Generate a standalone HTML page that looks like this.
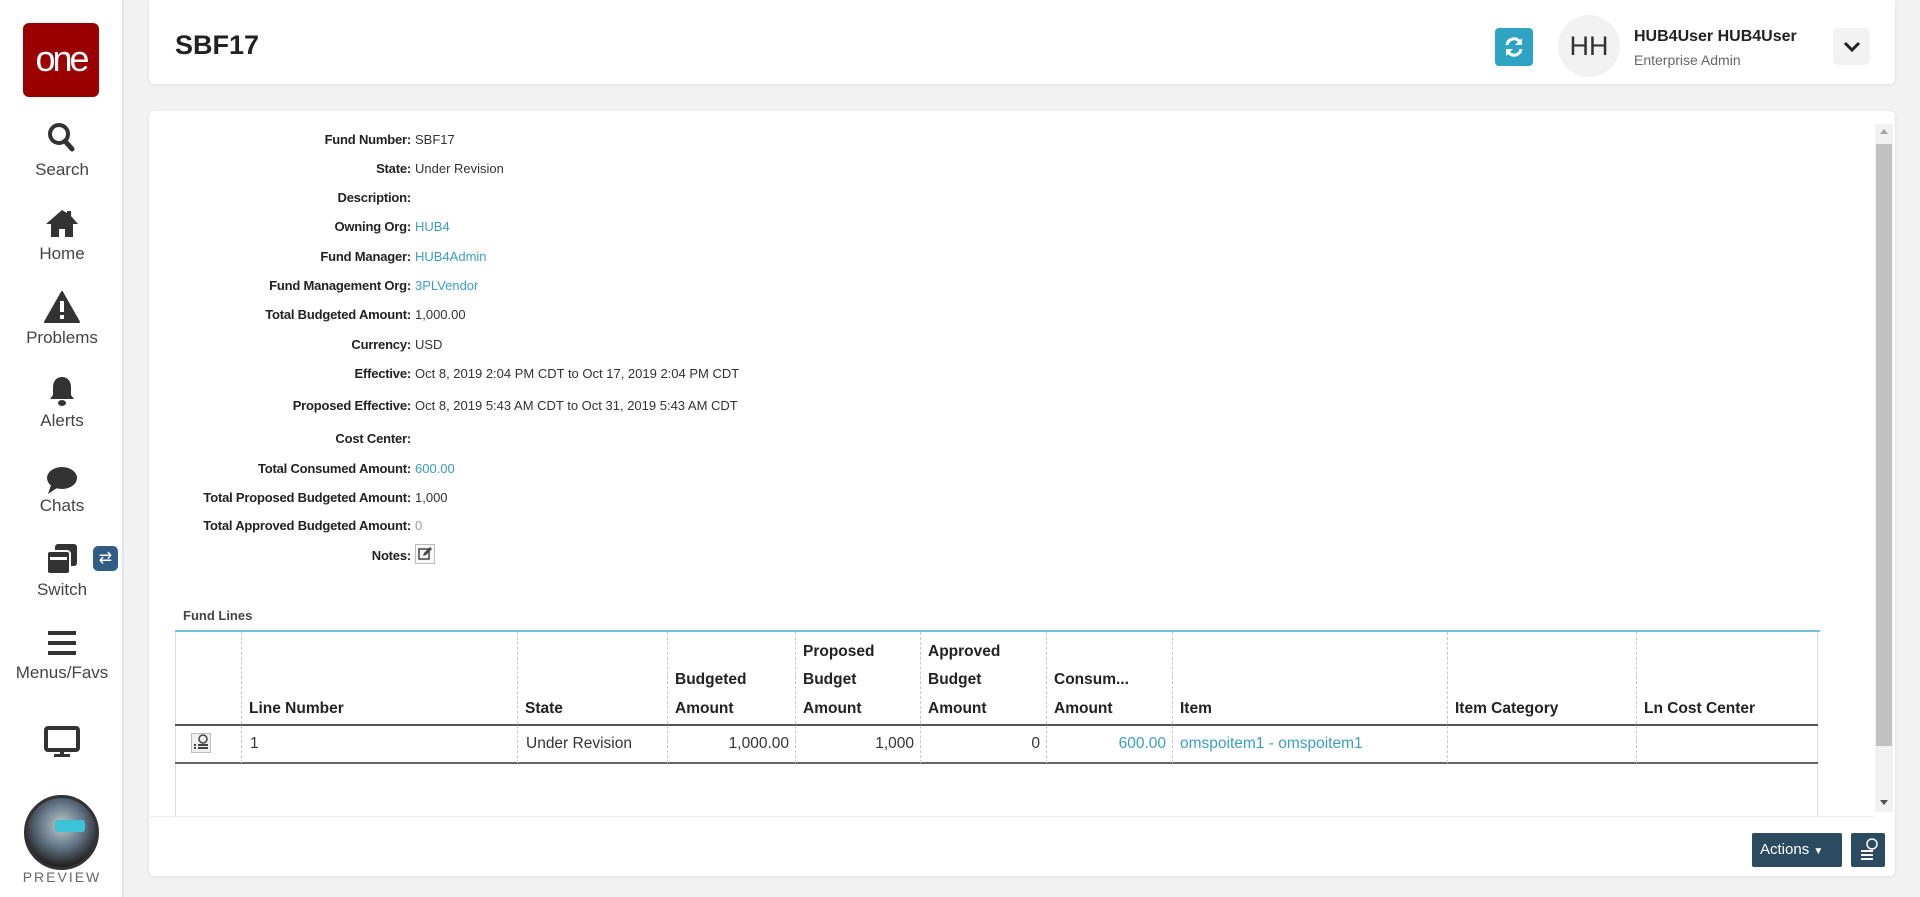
<!DOCTYPE html>
<html><head><meta charset="utf-8"><style>
*{box-sizing:border-box;margin:0;padding:0}
body{width:1920px;height:897px;background:#f2f2f2;font-family:"Liberation Sans",Arial,sans-serif;color:#222;position:relative;overflow:hidden}
.abs{position:absolute}
.side{left:0;top:0;width:124px;height:897px;background:#fff;border-right:2px solid #e3e3e3}
.nav{position:absolute;left:0;width:124px;text-align:center;font-size:17px;color:#444}
.card{background:#fff;border-radius:6px;box-shadow:0 1px 4px rgba(0,0,0,.08)}
.lab{position:absolute;right:1509px;font-size:13px;font-weight:bold;white-space:nowrap;letter-spacing:-.2px}
.val{position:absolute;left:415px;font-size:13px;white-space:nowrap;color:#333}
.td{position:absolute;top:735px;font-size:15.5px;color:#333}
.lnk,.td.lnk{color:#3a9ec4}
.th{position:absolute;font-size:15.5px;font-weight:bold;line-height:28.5px;bottom:174px}
.vd{position:absolute;top:632px;height:131px;border-left:1px dashed #c8c8c8}
</style></head><body>
<div class="abs side"></div>
<div class="abs" style="left:23px;top:23px;width:76px;height:74px;background:#9b0000;border-radius:6px;color:#fff;font-size:36px;text-align:center;line-height:72px;letter-spacing:-3px">one</div>
<svg class="abs" style="left:47px;top:122px" width="28" height="30" viewBox="0 0 28 30"><circle cx="12" cy="12" r="9" fill="none" stroke="#333" stroke-width="4"/><path d="M18 19l7 8" stroke="#333" stroke-width="5" stroke-linecap="round"/></svg>
<div class="nav" style="top:160px">Search</div>
<svg class="abs" style="left:44px;top:208px" width="36" height="30" viewBox="0 0 36 30"><path d="M18 2L2 16h5v13h8v-8h6v8h8V16h5L27 8V3h-4v2z" fill="#333"/></svg>
<div class="nav" style="top:244px">Home</div>
<svg class="abs" style="left:44px;top:291px" width="36" height="32" viewBox="0 0 36 32"><path d="M18 1L1 31h34z" fill="#333" stroke="#333" stroke-width="2" stroke-linejoin="round"/><rect x="16" y="10" width="4" height="11" fill="#fff"/><rect x="16" y="24" width="4" height="4" fill="#fff"/></svg>
<div class="nav" style="top:328px">Problems</div>
<svg class="abs" style="left:48px;top:375px" width="28" height="32" viewBox="0 0 28 32"><path d="M14 2c-6 0-9 5-9 10v8l-3 4h24l-3-4v-8c0-5-3-10-9-10z" fill="#333"/><ellipse cx="14" cy="28" rx="4" ry="3" fill="#333"/></svg>
<div class="nav" style="top:411px">Alerts</div>
<svg class="abs" style="left:45px;top:466px" width="34" height="30" viewBox="0 0 34 30"><ellipse cx="17" cy="12" rx="15" ry="11" fill="#333"/><path d="M6 19l-3 9 9-6z" fill="#333"/></svg>
<div class="nav" style="top:496px">Chats</div>
<svg class="abs" style="left:45px;top:542px" width="34" height="34" viewBox="0 0 34 34"><rect x="10" y="2" width="22" height="22" rx="3" fill="#333"/><rect x="2" y="9" width="23" height="23" rx="3" fill="#333" stroke="#fff" stroke-width="2"/><rect x="5" y="15" width="17" height="3" fill="#fff"/></svg>
<div class="abs" style="left:93px;top:546px;width:25px;height:25px;background:#2f5d86;border-radius:5px;color:#fff;font-size:16px;text-align:center;line-height:25px">⇄</div>
<div class="nav" style="top:580px">Switch</div>
<svg class="abs" style="left:47px;top:630px" width="30" height="26" viewBox="0 0 30 26"><rect x="1" y="1" width="28" height="4" fill="#333"/><rect x="1" y="11" width="28" height="4" fill="#333"/><rect x="1" y="21" width="28" height="4" fill="#333"/></svg>
<div class="nav" style="top:663px">Menus/Favs</div>
<svg class="abs" style="left:44px;top:726px" width="36" height="32" viewBox="0 0 36 32"><rect x="2" y="2" width="32" height="22" rx="2" fill="none" stroke="#333" stroke-width="4"/><rect x="16" y="24" width="4" height="4" fill="#333"/><rect x="10" y="28" width="16" height="3" fill="#333"/></svg>
<div class="abs" style="left:24px;top:795px;width:75px;height:75px;border-radius:50%;background:radial-gradient(circle at 50% 40%,#bcc 0,#678 40%,#222 75%);border:3px solid #333"></div>
<div class="abs" style="left:55px;top:820px;width:30px;height:12px;background:#3cc3d8;border-radius:3px"></div>
<div class="nav" style="top:869px;font-size:14px;letter-spacing:2px;color:#666">PREVIEW</div>

<div class="abs card" style="left:149px;top:0;width:1746px;height:84px;border-radius:0 0 6px 6px"></div>
<div class="abs" style="left:175px;top:30px;font-size:27px;font-weight:bold;color:#222">SBF17</div>
<div class="abs" style="left:1495px;top:28px;width:38px;height:38px;background:#2ea3c3;border-radius:4px"></div>
<svg class="abs" style="left:1503px;top:36px" width="22" height="22" viewBox="0 0 22 22"><path d="M4 9a7 7 0 0 1 12-4l2 2M18 13a7 7 0 0 1-12 4l-2-2" fill="none" stroke="#fff" stroke-width="3"/><path d="M19 2v7h-7z M3 20v-7h7z" fill="#fff"/></svg>
<div class="abs" style="left:1558px;top:15px;width:62px;height:62px;border-radius:50%;background:#f2f2f2;font-size:27px;line-height:62px;text-align:center;color:#333">HH</div>
<div class="abs" style="left:1634px;top:28px;font-size:16px;font-weight:bold;color:#222">HUB4User HUB4User</div>
<div class="abs" style="left:1634px;top:52px;font-size:14px;color:#666">Enterprise Admin</div>
<div class="abs" style="left:1833px;top:28px;width:37px;height:37px;background:#f2f2f2;border-radius:5px"></div>
<svg class="abs" style="left:1843px;top:40px" width="18" height="14" viewBox="0 0 18 14"><path d="M2 3l7 7 7-7" fill="none" stroke="#222" stroke-width="3"/></svg>

<div class="abs card" style="left:149px;top:111px;width:1746px;height:765px"></div>
<div class="abs" style="left:1875px;top:124px;width:18px;height:688px;background:#f1f1f1"></div>
<div class="abs" style="left:1876px;top:144px;width:16px;height:602px;background:#c1c1c1"></div>
<div class="abs" style="left:1880px;top:129px;width:0;height:0;border:4px solid transparent;border-bottom:5px solid #a3a3a3;border-top:0"></div>
<div class="abs" style="left:1880px;top:800px;width:0;height:0;border:4px solid transparent;border-top:5px solid #505050;border-bottom:0"></div>
<div class="abs" style="left:149px;top:816px;width:1726px;height:1px;background:#eee"></div>

<div class="lab" style="top:132px">Fund Number:</div><div class="val" style="top:132px">SBF17</div>
<div class="lab" style="top:161px">State:</div><div class="val" style="top:161px">Under Revision</div>
<div class="lab" style="top:190px">Description:</div>
<div class="lab" style="top:219px">Owning Org:</div><div class="val lnk" style="top:219px">HUB4</div>
<div class="lab" style="top:249px">Fund Manager:</div><div class="val lnk" style="top:249px">HUB4Admin</div>
<div class="lab" style="top:278px">Fund Management Org:</div><div class="val lnk" style="top:278px">3PLVendor</div>
<div class="lab" style="top:307px">Total Budgeted Amount:</div><div class="val" style="top:307px">1,000.00</div>
<div class="lab" style="top:337px">Currency:</div><div class="val" style="top:337px">USD</div>
<div class="lab" style="top:366px">Effective:</div><div class="val" style="top:366px">Oct 8, 2019 2:04 PM CDT to Oct 17, 2019 2:04 PM CDT</div>
<div class="lab" style="top:398px">Proposed Effective:</div><div class="val" style="top:398px">Oct 8, 2019 5:43 AM CDT to Oct 31, 2019 5:43 AM CDT</div>
<div class="lab" style="top:431px">Cost Center:</div>
<div class="lab" style="top:461px">Total Consumed Amount:</div><div class="val lnk" style="top:461px">600.00</div>
<div class="lab" style="top:490px">Total Proposed Budgeted Amount:</div><div class="val" style="top:490px">1,000</div>
<div class="lab" style="top:518px">Total Approved Budgeted Amount:</div><div class="val" style="top:518px;color:#999">0</div>
<div class="lab" style="top:548px">Notes:</div>
<div class="abs" style="left:415px;top:544px;width:20px;height:20px;border:1px solid #bbb;background:#f7f7f7"></div>
<svg class="abs" style="left:418px;top:546px" width="15" height="15" viewBox="0 0 15 15"><rect x="1" y="3" width="10" height="10" fill="none" stroke="#444" stroke-width="1.5"/><path d="M5 10l1-3 6-6 2 2-6 6z" fill="#444"/></svg>

<div class="abs" style="left:183px;top:608px;font-size:13px;font-weight:bold;color:#444">Fund Lines</div>
<div class="abs" style="left:175px;top:630px;width:1645px;height:2px;background:#6cc3da"></div>
<div class="abs" style="left:175px;top:632px;width:1px;height:185px;background:#ddd"></div>
<div class="abs" style="left:1817px;top:632px;width:1px;height:185px;background:#ddd"></div>
<div class="abs" style="left:175px;top:724px;width:1643px;height:2px;background:#555"></div>
<div class="abs" style="left:175px;top:762px;width:1643px;height:2px;background:#666"></div>
<div class="vd" style="left:241px"></div><div class="vd" style="left:517px"></div><div class="vd" style="left:667px"></div><div class="vd" style="left:795px"></div><div class="vd" style="left:920px"></div><div class="vd" style="left:1046px"></div><div class="vd" style="left:1172px"></div><div class="vd" style="left:1447px"></div><div class="vd" style="left:1636px"></div>
<div style="position:absolute;left:0;top:0;width:1920px;height:897px">
<div class="th" style="left:249px">Line Number</div>
<div class="th" style="left:525px">State</div>
<div class="th" style="left:675px">Budgeted<br>Amount</div>
<div class="th" style="left:803px">Proposed<br>Budget<br>Amount</div>
<div class="th" style="left:928px">Approved<br>Budget<br>Amount</div>
<div class="th" style="left:1054px">Consum...<br>Amount</div>
<div class="th" style="left:1180px">Item</div>
<div class="th" style="left:1455px">Item Category</div>
<div class="th" style="left:1644px">Ln Cost Center</div>
</div>
<div class="abs" style="left:191px;top:733px;width:20px;height:20px;border:1px solid #bbb;background:#f0f0f0"></div>
<svg class="abs" style="left:193px;top:734px" width="16" height="18" viewBox="0 0 16 18"><circle cx="10" cy="5" r="4" fill="none" stroke="#444" stroke-width="1.5"/><rect x="5" y="10" width="10" height="2" fill="#444"/><rect x="5" y="13" width="10" height="2" fill="#444"/><rect x="1" y="10" width="2" height="2" fill="#444"/><rect x="1" y="13" width="2" height="2" fill="#444"/></svg>
<div class="td" style="left:250px">1</div>
<div class="td" style="left:526px">Under Revision</div>
<div class="td" style="left:667px;width:122px;text-align:right">1,000.00</div>
<div class="td" style="left:795px;width:119px;text-align:right">1,000</div>
<div class="td" style="left:920px;width:120px;text-align:right">0</div>
<div class="td lnk" style="left:1046px;width:120px;text-align:right">600.00</div>
<div class="td lnk" style="left:1180px">omspoitem1 - omspoitem1</div>

<div class="abs" style="left:1752px;top:833px;width:90px;height:34px;background:#2c4a60;border-radius:2px;color:#fff;font-size:15px;line-height:34px;padding-left:8px">Actions <span style="font-size:10px">▼</span></div>
<div class="abs" style="left:1851px;top:833px;width:34px;height:34px;background:#2c4a60;border-radius:2px"></div>
<svg class="abs" style="left:1857px;top:838px" width="22" height="24" viewBox="0 0 22 24"><circle cx="15" cy="6" r="5" fill="none" stroke="#fff" stroke-width="1.5"/><rect x="4" y="12" width="12" height="2" fill="#fff"/><rect x="4" y="16" width="12" height="2" fill="#fff"/><rect x="4" y="20" width="12" height="2" fill="#fff"/></svg>
</body></html>
